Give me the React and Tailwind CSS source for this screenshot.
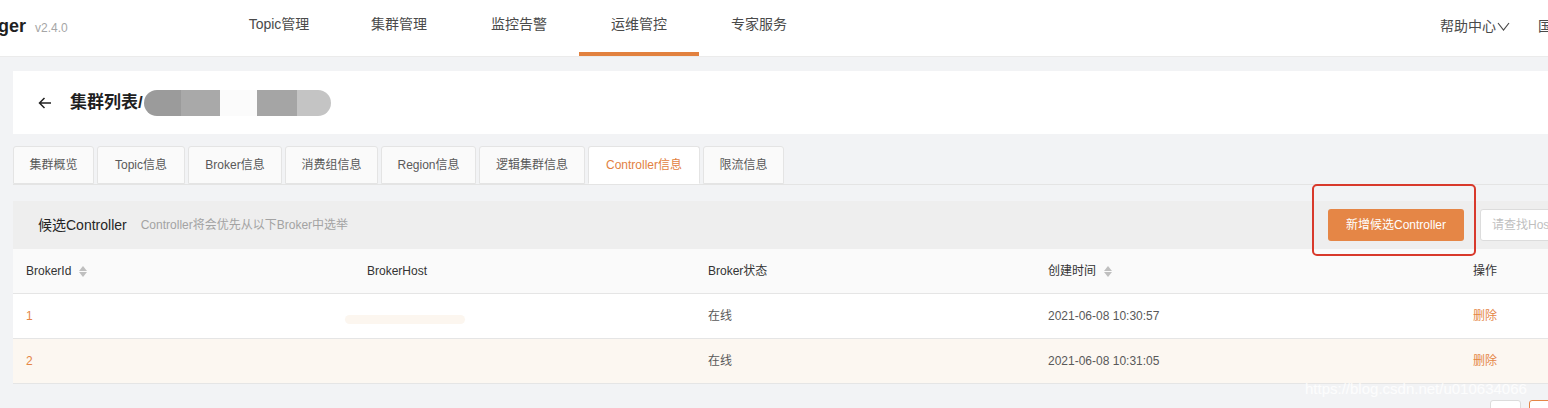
import React from 'react';

const font = { fontFamily: '"Liberation Sans", "Noto Sans CJK SC", sans-serif' };

const navItems = ['Topic管理', '集群管理', '监控告警', '运维管控', '专家服务'];
const tabs = ['集群概览', 'Topic信息', 'Broker信息', '消费组信息', 'Region信息', '逻辑集群信息', 'Controller信息', '限流信息'];
const tabWidths = ['w-[81px]', 'w-[88px]', 'w-[94px]', 'w-[93px]', 'w-[95px]', 'w-[106px]', 'w-[112px]', 'w-[81px]'];

const rows = [
  { id: '1', status: '在线', time: '2021-06-08 10:30:57', hover: false },
  { id: '2', status: '在线', time: '2021-06-08 10:31:05', hover: true },
];

function SortIcon() {
  return (
    <span className="ml-[8px] inline-flex flex-col gap-[1px]">
      <svg width="8" height="5" viewBox="0 0 8 5"><path d="M4 0 L8 5 L0 5 Z" fill="#bfbfbf" /></svg>
      <svg width="8" height="5" viewBox="0 0 8 5"><path d="M0 0 L8 0 L4 5 Z" fill="#bfbfbf" /></svg>
    </span>
  );
}

function Header() {
  return (
    <div className="flex h-[57px] items-center border-b border-[#ebebeb] bg-white">
      <div className="mb-[4px] flex w-[219px] items-baseline">
        <span className="ml-[-2px] text-[18px] font-bold text-[#1f1f1f]">ger</span>
        <span className="ml-[9px] text-[12px] text-[#a6a6a6]">v2.4.0</span>
      </div>
      <div className="flex h-full">
        {navItems.map((item, idx) => (
          <div
            key={item}
            className={`flex h-full w-[120px] items-center justify-center border-b-[4px] text-[14px] text-[#4a4a4a] ${idx === 3 ? 'border-[#e2813f]' : 'border-transparent'}`}
          >
            <span className="mb-[3px]">{item}</span>
          </div>
        ))}
      </div>
      <div className="mb-[4px] ml-auto flex items-center text-[14px] text-[#4a4a4a]">
        <span>帮助中心</span>
        <svg width="13" height="9" viewBox="0 0 13 9" className="ml-[1px]"><path d="M1 1 L6.5 8 L12 1" fill="none" stroke="#4a4a4a" strokeWidth="1.2" /></svg>
        <span className="ml-[28px] mr-[-4px]">国</span>
      </div>
    </div>
  );
}

function TitleCard() {
  return (
    <div className="flex h-[63px] items-center bg-white pl-[25px]">
      <svg width="14" height="12" viewBox="0 0 14 12"><path d="M13 6 H1.5 M6.5 1 L1.5 6 L6.5 11" fill="none" stroke="#222" strokeWidth="1.5" /></svg>
      <span className="ml-[18px] text-[17px] font-bold text-[#1f1f1f]">集群列表/</span>
      <div className="ml-[1px] flex h-[26px] w-[187px] overflow-hidden rounded-full">
        <div className="w-[37px] bg-[#9b9b9b]" />
        <div className="w-[39px] bg-[#a9a9a9]" />
        <div className="w-[37px] bg-[#fbfbfb]" />
        <div className="w-[40px] bg-[#a5a5a5]" />
        <div className="w-[34px] bg-[#c4c4c4]" />
      </div>
    </div>
  );
}

function Tabs() {
  return (
    <div className="mt-[12px] flex gap-[3px] border-b border-[#e4e4e4]">
      {tabs.map((tab, idx) => (
        <div
          key={tab}
          className={`flex h-[38px] ${tabWidths[idx]} items-center justify-center rounded-t-[3px] border border-[#e4e4e4] text-[12px] ${idx === 6 ? 'mb-[-1px] border-b-white bg-white text-[#e2813f]' : 'bg-[#fafafa] text-[#595959]'}`}
        >
          {tab}
        </div>
      ))}
    </div>
  );
}

function ControllerTable() {
  return (
    <div className="relative mt-[16px]">
      <div className="flex h-[48px] items-center bg-[#eeeeee] pl-[25px]">
        <span className="text-[14px] text-[#262626]">候选Controller</span>
        <span className="ml-[14px] text-[12px] text-[#a3a3a3]">Controller将会优先从以下Broker中选举</span>
        <div className="ml-auto flex items-center">
          <button className="flex h-[32px] w-[136px] items-center justify-center rounded-[3px] bg-[#e58646] text-[12px] text-white">
            新增候选Controller
          </button>
          <div className="ml-[16px] flex h-[32px] w-[100px] items-center rounded-l-[3px] border border-[#dcdcdc] bg-white pl-[11px] text-[12px] text-[#bfbfbf]">
            请查找Host
          </div>
        </div>
      </div>
      <div className="pointer-events-none absolute left-[1299px] top-[-17px] h-[72px] w-[164px] rounded-[5px] border-[2px] border-[#d8392b]" />
      <div className="flex h-[45px] items-center border-b border-[#e5e5e5] bg-[#fafafa] text-[12px] text-[#333]">
        <div className="flex w-[341px] items-center pl-[13px]">BrokerId<SortIcon /></div>
        <div className="w-[341px] pl-[13px]">BrokerHost</div>
        <div className="w-[340px] pl-[13px]">Broker状态</div>
        <div className="flex w-[425px] items-center pl-[13px]">创建时间<SortIcon /></div>
        <div className="pl-[13px]">操作</div>
      </div>
      {rows.map((row) => (
        <div
          key={row.id}
          className={`flex h-[45px] items-center border-b border-[#e5e5e5] text-[12px] text-[#595959] ${row.hover ? 'bg-[#fcf7f1]' : 'bg-white'}`}
        >
          <div className="w-[341px] pl-[13px] text-[#e58646]">{row.id}</div>
          <div className="w-[341px] pl-[13px]">
            {!row.hover && <div className="ml-[-22px] mt-[6px] h-[9px] w-[120px] rounded-full bg-[#fcf6ef]" />}
          </div>
          <div className="w-[340px] pl-[13px]">{row.status}</div>
          <div className="w-[425px] pl-[13px]">{row.time}</div>
          <div className="pl-[13px] text-[#e58646]">删除</div>
        </div>
      ))}
      <div className="absolute left-[1477px] top-[199px] h-[20px] w-[31px] rounded-[3px] border border-[#dcdcdc] bg-white" />
      <div className="absolute left-[1516px] top-[199px] h-[20px] w-[31px] rounded-[3px] border border-[#e58646] bg-white" />
      <div className="pointer-events-none absolute left-[1292px] top-[177px] text-[15px] text-white/80">https://blog.csdn.net/u010634066</div>
    </div>
  );
}

export default function App() {
  return (
    <div className="h-[408px] w-[1548px] overflow-hidden bg-[#f2f3f5]" style={font}>
      <Header />
      <div className="w-[1580px] pl-[13px] pt-[14px]">
        <TitleCard />
        <Tabs />
        <ControllerTable />
      </div>
    </div>
  );
}
